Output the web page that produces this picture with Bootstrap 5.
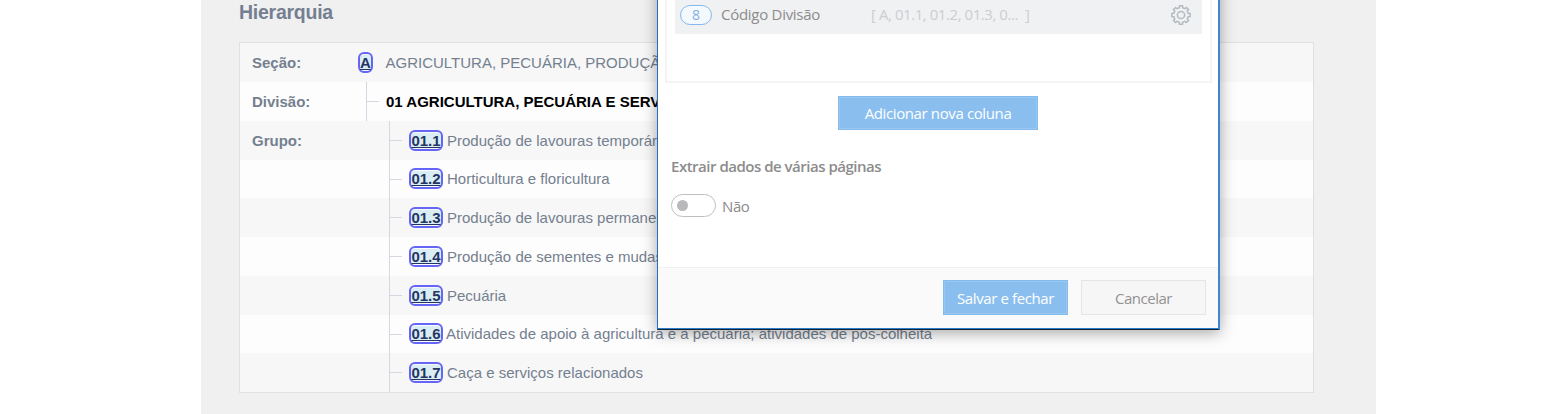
<!DOCTYPE html>
<html lang="pt-BR">
<head>
<meta charset="utf-8">
<meta name="viewport" content="width=device-width, initial-scale=1">
<title>Hierarquia</title>
<link href="https://cdn.jsdelivr.net/npm/bootstrap@5.3.0/dist/css/bootstrap.min.css" rel="stylesheet">
<style>
html,body{height:414px;overflow:hidden;background:#fff}
body{font-family:"Liberation Sans",Arial,sans-serif;font-size:15px;color:#74808f}
.page{width:1175px;height:414px;margin-left:201px;padding:0 62px 0 38px;background:#f0f0f0}
.page h1{font-size:19.5px;letter-spacing:-.25px;font-weight:700;line-height:24px;height:42px;margin:0;color:#757f92}
.tree{height:351px;border:1px solid #e0e0e0;display:grid;grid-template-rows:39px 39px 39px 38px 39px 39px 39px 38px 39px}
.line{background:#f7f7f7;line-height:21px}
.line:nth-child(even){background:#fdfdfd}
.line:nth-child(4n){line-height:20px}
.term{width:149px;padding-left:12px;font-weight:700;flex:none}
.term.sec{width:118px}.term.div{width:126px}
.branch{align-self:stretch;border-left:1px solid #d5d8e0;width:20px;display:flex;align-items:center;flex:none}
.branch::before{content:"";width:12px;border-top:1px solid #d5d8e0}
.code{border:2px solid #6565f6;border-radius:6px;height:21px;width:34px;padding:1px 0;line-height:15px;text-align:center;color:#253561;font-weight:700;text-decoration:underline;background:#d9edf5 content-box;flex:none;white-space:nowrap}
.line:nth-child(4n) .code{margin-bottom:1px}
.dlg{left:657px;top:-60px;width:563px;height:390px;border:solid #3c87cf;border-width:0 2px 1px 1px;border-bottom-color:#123;border-left-color:#1f70c4;background:#fff;box-shadow:0 3px 14px rgba(0,0,0,.34);font-family:"Open Sans","Noto Sans",sans-serif;color:#8c8c8c;padding-top:60px}
.cols{width:547px;height:83px;margin-left:7px;border:solid #f4f4f4;border-width:0 2px 2px;padding:0 8px}
.item{height:34px;background:#f0f1f3;padding:0 10px 5px 5px}
.num{width:32px;height:20px;border:1px solid #85b8ec;border-radius:10px;background:#f4f9fe;color:#83b1df;font-size:14px;line-height:17px;text-align:center}
.sample{color:#ccced1;margin-left:51px;letter-spacing:-.44px;white-space:pre}
.act{border:1px solid #84bbed;box-shadow:inset 0 0 0 1px #98c7f1;background:#8abeee;color:#fff;border-radius:0;padding:0;font-size:15px;letter-spacing:-.38px;line-height:33px;white-space:nowrap}
.act.cancel{background:#f6f6f6;border-color:#e5e5e5;box-shadow:none;color:#929292;letter-spacing:-.5px}
.foot{height:62px;background:#fafafa;border-top:1px solid #f0f0f0;border-bottom:1px solid #2b7cca;gap:13px;padding:12px 12px 0 0}
.foot .act{width:125px;height:35px;padding-top:1px}
.knob{width:45px;height:23px;border:1.4px solid #bfbfbf;border-radius:12px;padding-left:5px}
.knob i{width:11px;height:11px;border-radius:50%;background:#b9b9bb}
.t{display:inline-block;white-space:nowrap}
</style>
</head>
<body>
<main class="page">
<h1><span class="t">Hierarquia</span></h1>
<div class="tree">
<div class="line d-flex align-items-center"><div class="term sec">Seção:</div><a class="code" style="width:15px">A</a><span class="t" style="margin-left:12.5px">AGRICULTURA, PECUÁRIA, PRODUÇÃO FLORESTAL, PESCA E AQÜICULTURA</span></div>
<div class="line d-flex align-items-center"><div class="term div">Divisão:</div><div class="branch"></div><span class="t fw-bold text-black">01 AGRICULTURA, PECUÁRIA E SERVIÇOS RELACIONADOS</span></div>
<div class="line d-flex align-items-center"><div class="term">Grupo:</div><div class="branch"></div><a class="code">01.1</a><span class="t ms-1">Produção de lavouras temporárias</span></div>
<div class="line d-flex align-items-center"><div class="term"></div><div class="branch"></div><a class="code">01.2</a><span class="t ms-1">Horticultura e floricultura</span></div>
<div class="line d-flex align-items-center"><div class="term"></div><div class="branch"></div><a class="code">01.3</a><span class="t ms-1">Produção de lavouras permanentes</span></div>
<div class="line d-flex align-items-center"><div class="term"></div><div class="branch"></div><a class="code">01.4</a><span class="t ms-1">Produção de sementes e mudas certificadas</span></div>
<div class="line d-flex align-items-center"><div class="term"></div><div class="branch"></div><a class="code">01.5</a><span class="t ms-1">Pecuária</span></div>
<div class="line d-flex align-items-center"><div class="term"></div><div class="branch"></div><a class="code">01.6</a><span class="t" style="margin-left:3px">Atividades de apoio à agricultura e à pecuária; atividades de pós-colheita</span></div>
<div class="line d-flex align-items-center"><div class="term"></div><div class="branch"></div><a class="code">01.7</a><span class="t ms-1">Caça e serviços relacionados</span></div>
</div>
</main>
<section class="dlg position-absolute d-flex flex-column">
<div class="cols"><div class="item d-flex align-items-center"><span class="num">8</span><span class="t" style="margin-left:9px;letter-spacing:-.28px">Código Divisão</span><span class="sample">[ A, 01.1, 01.2, 01.3, 0...  ]</span>
<svg class="ms-auto" width="22" height="22" viewBox="-11 -11 22 22" fill="none" stroke="#b4babf" stroke-width="1.5" stroke-linejoin="miter"><circle r="3.6"/><path id="gear"/></svg></div></div>
<button class="btn act align-self-center" style="width:200px;height:34px;margin-top:13px">Adicionar nova coluna</button>
<div class="fw-semibold" style="margin:25px 0 0 13px;line-height:22px"><span class="t" style="letter-spacing:-.49px">Extrair dados de várias páginas</span></div>
<div class="d-flex align-items-center" style="margin:17px 0 0 13px;height:23px"><span class="knob d-flex align-items-center"><i></i></span><span class="t" style="margin:2px 0 0 6px;letter-spacing:-.4px">Não</span></div>
<div class="foot d-flex justify-content-end mt-auto"><button class="btn act">Salvar e fechar</button><button class="btn act cancel">Cancelar</button></div>
</section>
<script>
/* Gear outline: eight teeth spaced evenly around the hub. */
let d='';
for(let k=0;k<8;k++)[[-13,7.4],[-9.5,9.3],[9.5,9.3],[13,7.4]].forEach(([a,r],j)=>{
  const q=(k*45+a)*Math.PI/180;
  d+=(k||j?'L':'M')+(r*Math.sin(q)).toFixed(2)+' '+(-r*Math.cos(q)).toFixed(2);
});
document.getElementById('gear').setAttribute('d',d+'Z');
</script>
<script src="https://cdn.jsdelivr.net/npm/bootstrap@5.3.0/dist/js/bootstrap.bundle.min.js"></script>
</body>
</html>
